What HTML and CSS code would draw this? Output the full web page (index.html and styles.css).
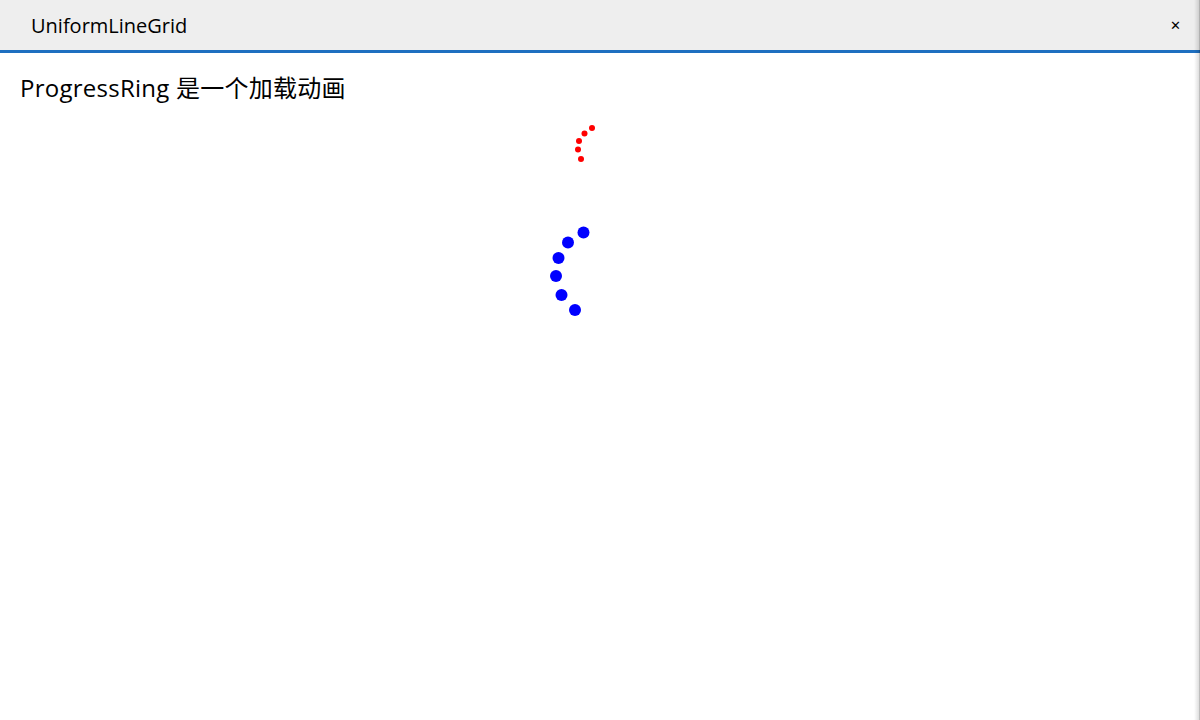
FILE: index.html
```html
<!DOCTYPE html>
<html lang="zh">
<head>
<meta charset="utf-8">
<title>UniformLineGrid</title>
<link rel="stylesheet" href="styles.css">
</head>
<body>
<div class="window">
  <header class="titlebar">
    <span class="title">UniformLineGrid</span>
    <span class="close">✕</span>
  </header>
  <main class="content">
    <h1 class="heading">ProgressRing 是一个加载动画</h1>
    <svg class="rings" width="1194" height="400" viewBox="0 0 1194 400">
      <g fill="#ff0000">
        <circle cx="592" cy="128" r="3"/>
        <circle cx="584.5" cy="133.5" r="3"/>
        <circle cx="579" cy="141" r="3"/>
        <circle cx="578" cy="149.5" r="3"/>
        <circle cx="581" cy="159" r="3"/>
      </g>
      <g fill="#0000ff">
        <circle cx="583.5" cy="232.5" r="6"/>
        <circle cx="568" cy="242.5" r="6"/>
        <circle cx="558.5" cy="258" r="6"/>
        <circle cx="556" cy="276" r="6"/>
        <circle cx="561.5" cy="295" r="6"/>
        <circle cx="575" cy="310" r="6"/>
      </g>
    </svg>
  </main>
  <div class="edge"></div>
</div>
</body>
</html>
```
FILE: styles.css
```css
html, body {
  margin: 0;
  padding: 0;
  width: 1200px;
  height: 720px;
  overflow: hidden;
  background: #ffffff;
  font-family: "Open Sans", "Noto Sans", "Noto Sans CJK SC", sans-serif;
}
.window {
  position: relative;
  width: 1200px;
  height: 720px;
}
.titlebar {
  height: 50px;
  background: #eeeeee;
  border-bottom: 3px solid #1e6fc0;
  display: flex;
  align-items: center;
  justify-content: space-between;
  padding: 0 19px 0 31px;
  box-sizing: content-box;
}
.title {
  font-size: 20px;
  color: #000;
}
.close {
  font-size: 13px;
  color: #000;
  font-family: "DejaVu Sans", sans-serif;
}
.content {
  position: relative;
}
.heading {
  margin: 0;
  padding: 19px 0 0 20px;
  font-size: 24px;
  font-weight: normal;
  line-height: 32px;
  color: #000;
  letter-spacing: 0.25px;
}
.rings {
  position: absolute;
  left: 0;
  top: -53px;
}
.edge {
  position: absolute;
  top: 0;
  right: 0;
  width: 6px;
  height: 720px;
  background: linear-gradient(to right, rgba(0,0,0,0), rgba(0,0,0,0.12) 80%, rgba(0,0,0,0.35));
}
```
